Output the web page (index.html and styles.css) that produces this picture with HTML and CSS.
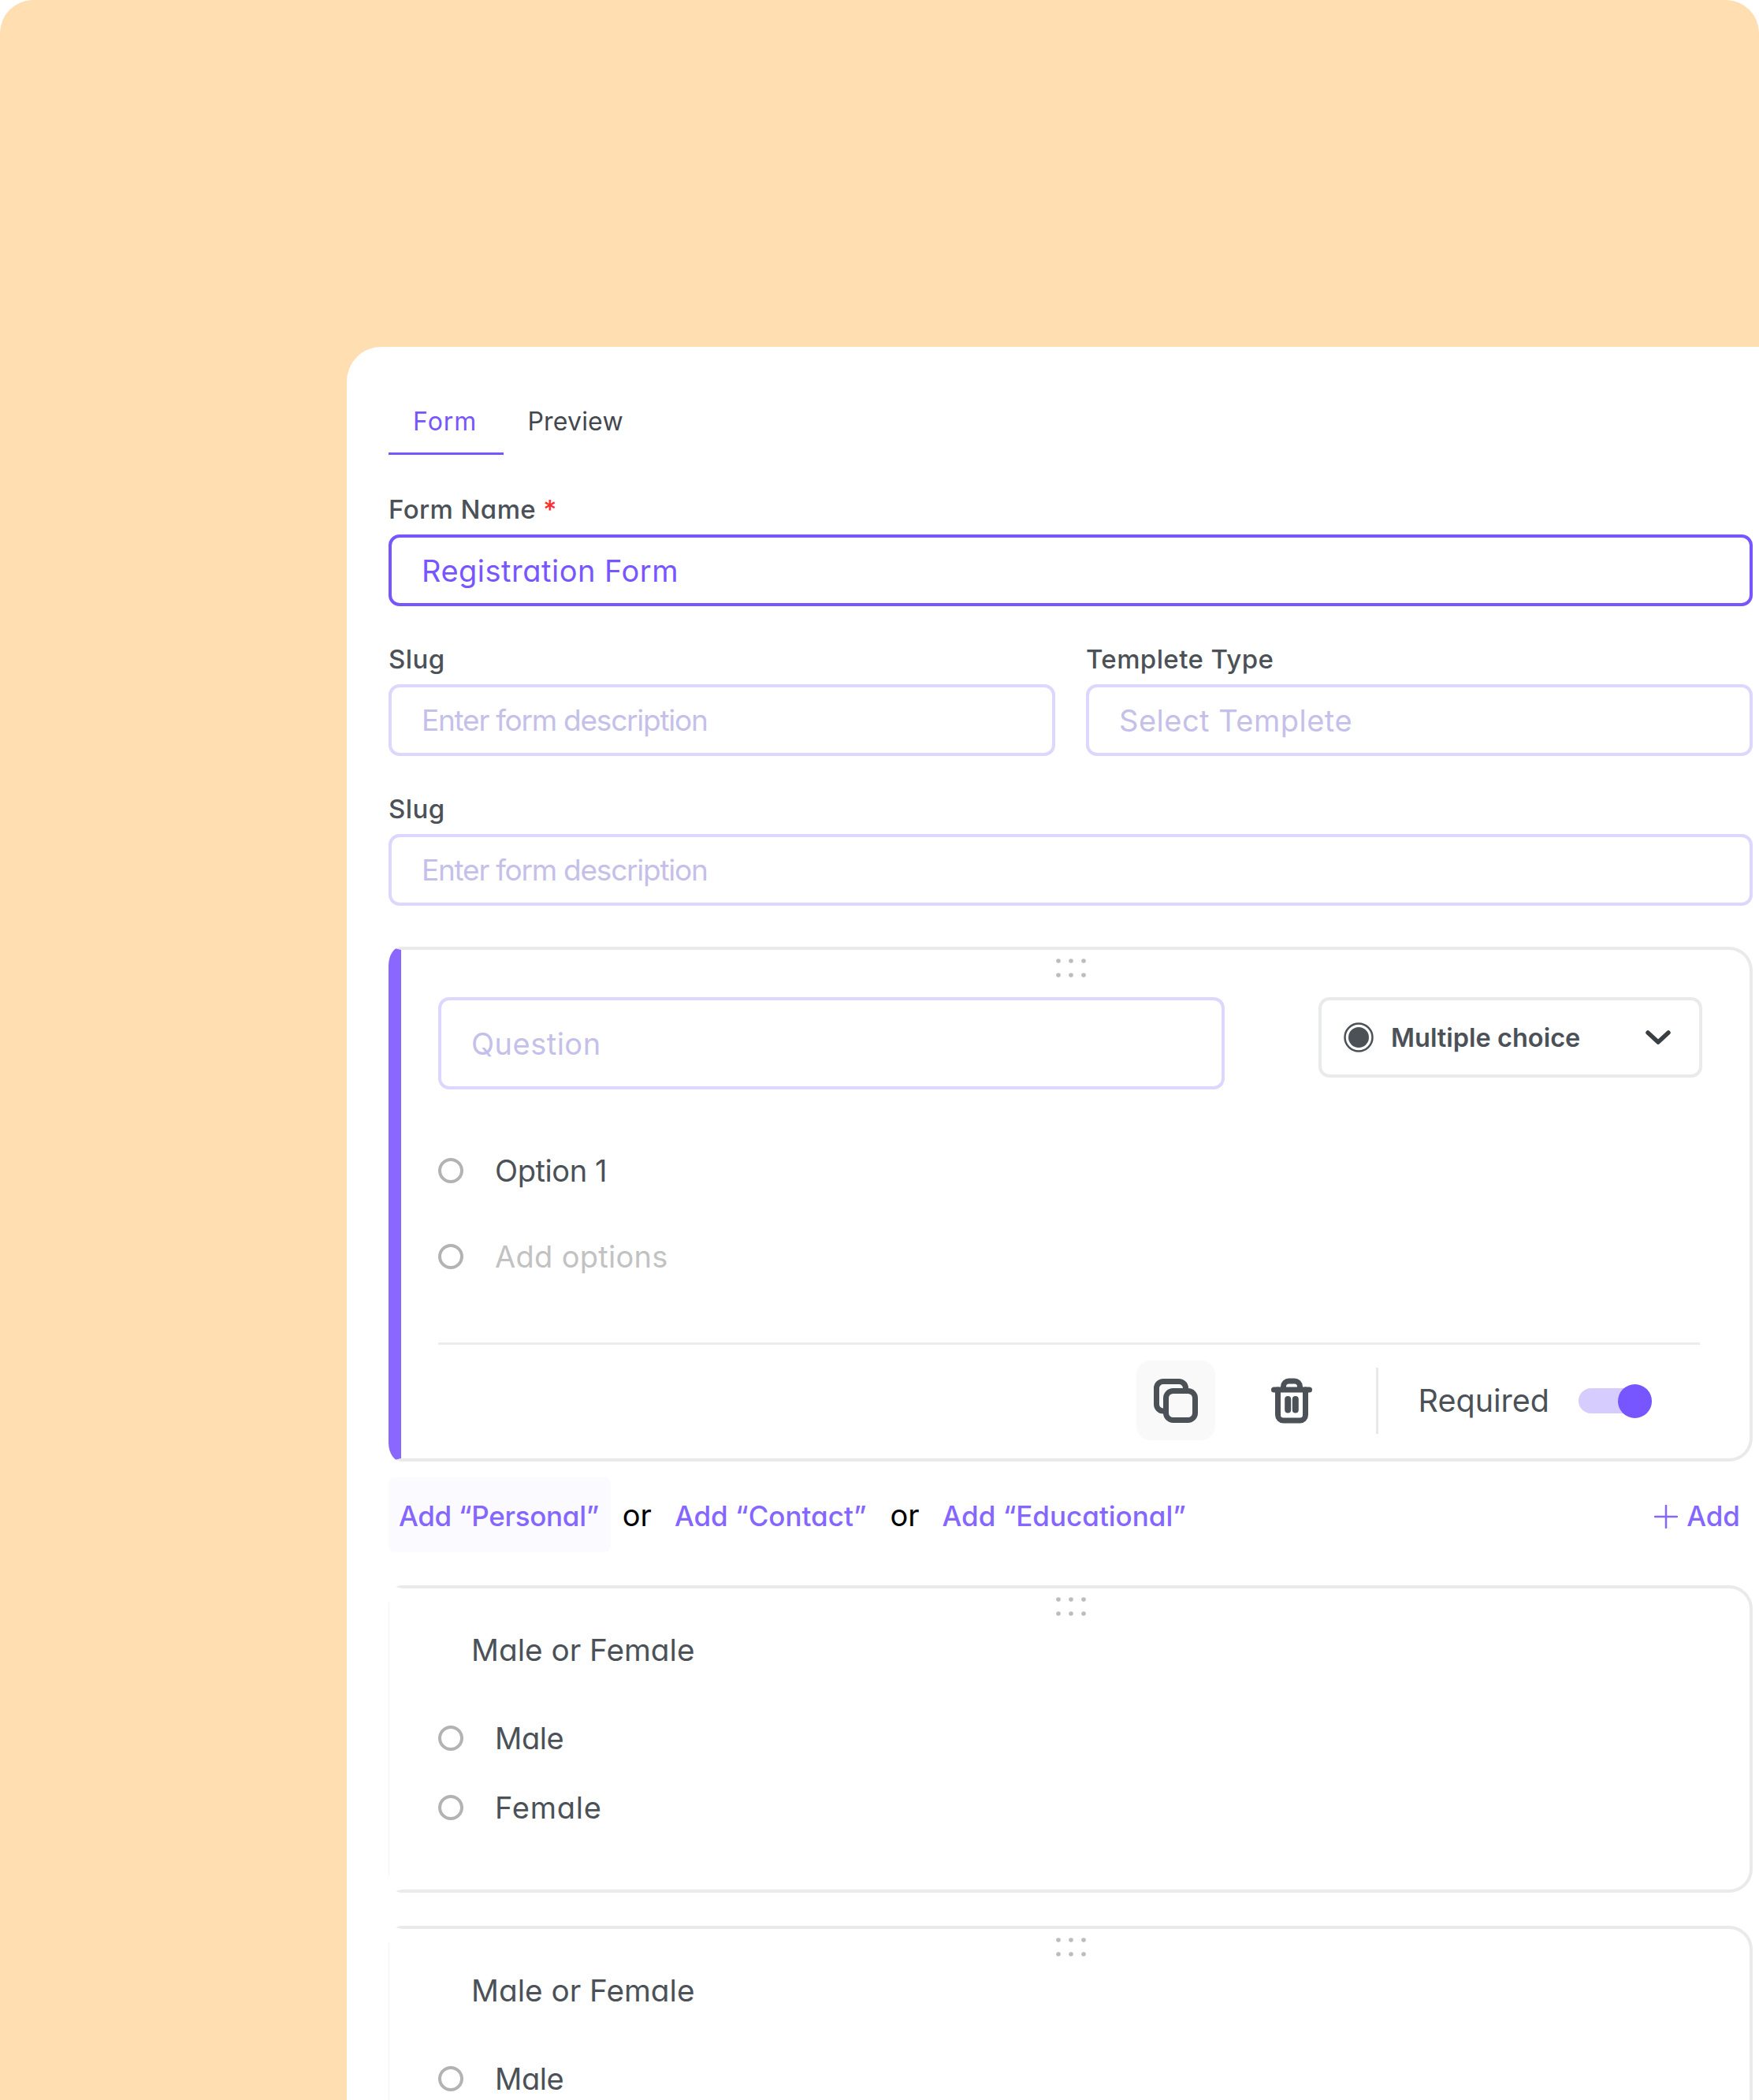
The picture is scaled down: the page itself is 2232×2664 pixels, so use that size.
FILE: index.html
```html
<!DOCTYPE html>
<html lang="en">
<head>
    <meta charset="UTF-8">
    <meta name="viewport" content="width=device-width, initial-scale=1.0">
    <title>Form Builder</title>
    <link rel="stylesheet" href="styles.css">
</head>
<body>

<div class="page">
    <main class="panel">
        <!-- Tabs -->
        <nav class="tabs">
            <a class="tab tab-active">Form</a>
            <a class="tab">Preview</a>
        </nav>

        <!-- Form details -->
        <div class="field field-first">
            <label for="formName">Form Name <span class="star">*</span></label>
            <input class="input input-active" id="formName" type="text" value="Registration Form">
        </div>
        <div class="field-row">
            <div class="field">
                <label for="slug">Slug</label>
                <input class="input input-desc" id="slug" type="text" placeholder="Enter form description">
            </div>
            <div class="field">
                <label for="template">Templete Type</label>
                <input class="input" id="template" type="text" placeholder="Select Templete">
            </div>
        </div>
        <div class="field">
            <label for="slug2">Slug</label>
            <input class="input input-desc" id="slug2" type="text" placeholder="Enter form description">
        </div>

        <!-- Question being edited -->
        <section class="card card-active">
            <div class="drag">
                <svg width="38" height="24" viewBox="0 0 38 24"><g fill="#bdbdbd"><circle cx="3" cy="3" r="2.8"/><circle cx="19" cy="3" r="2.8"/><circle cx="35" cy="3" r="2.8"/><circle cx="3" cy="21" r="2.8"/><circle cx="19" cy="21" r="2.8"/><circle cx="35" cy="21" r="2.8"/></g></svg>
            </div>
            <div class="card-body">
                <div class="question-row">
                    <input class="input input-question" type="text" placeholder="Question">
                    <div class="type-select">
                        <svg width="38" height="38" viewBox="0 0 38 38"><circle cx="19" cy="19" r="17.500" fill="none" stroke="#4b5157" stroke-width="2.500"/><circle cx="19" cy="19" r="13" fill="#4b5157"/></svg>
                        <span class="type-name">Multiple choice</span>
                        <svg class="chevron" width="32" height="18" viewBox="0 0 32 18"><path d="M3 3 L16 15 L29 3" fill="none" stroke="#3a3f44" stroke-width="5.500" stroke-linecap="round" stroke-linejoin="round"/></svg>
                    </div>
                </div>
                <div class="option option-one"><span class="radio"></span>Option 1</div>
                <div class="option option-add"><span class="radio"></span>Add options</div>
                <div class="divider"></div>
                <div class="toolbar">
                    <button class="icon-btn icon-btn-on">
                        <svg width="58" height="58" viewBox="0 0 58 58" fill="none" stroke="#4b5157" stroke-width="7"><path d="M15 42 H13 A8.500 8.500 0 0 1 4.500 33.500 V13 A8.500 8.500 0 0 1 13 4.500 H33 A8.500 8.500 0 0 1 41.500 13 V16"/><rect x="16.500" y="16.500" width="37" height="37" rx="9"/></svg>
                    </button>
                    <button class="icon-btn icon-trash">
                        <svg width="54" height="58" viewBox="0 0 54 58" fill="none" stroke="#4b5157" stroke-width="7" stroke-linecap="round"><path d="M4.500 15 H49.500"/><path d="M16.500 14 V11 A7 7 0 0 1 23.500 4 H30.500 A7 7 0 0 1 37.500 11 V14"/><path d="M9.500 15 V47 A7 7 0 0 0 16.500 54 H37.500 A7 7 0 0 0 44.500 47 V15"/><path d="M22.200 27 V40.500 M31.800 27 V40.500" stroke-width="8"/></svg>
                    </button>
                    <span class="tool-sep"></span>
                    <span class="required">Required</span>
                    <span class="toggle"><span class="knob"></span></span>
                </div>
            </div>
        </section>

        <!-- Add section links -->
        <div class="add-row">
            <a class="add-link add-link-on">Add “Personal”</a>
            <span class="or">or</span>
            <a class="add-link">Add “Contact”</a>
            <span class="or">or</span>
            <a class="add-link">Add “Educational”</a>
            <a class="add-new">
                <svg width="30" height="30" viewBox="0 0 30 30"><path d="M15 1 V29 M1 15 H29" stroke="#8566ff" stroke-width="2.500" stroke-linecap="round"/></svg>
                Add
            </a>
        </div>

        <!-- Saved questions -->
        <section class="card card-plain">
            <div class="drag">
                <svg width="38" height="24" viewBox="0 0 38 24"><g fill="#bdbdbd"><circle cx="3" cy="3" r="2.8"/><circle cx="19" cy="3" r="2.8"/><circle cx="35" cy="3" r="2.8"/><circle cx="3" cy="21" r="2.8"/><circle cx="19" cy="21" r="2.8"/><circle cx="35" cy="21" r="2.8"/></g></svg>
            </div>
            <div class="card-body">
                <div class="question-title">Male or Female</div>
                <div class="option option-male"><span class="radio"></span>Male</div>
                <div class="option option-female"><span class="radio"></span>Female</div>
            </div>
        </section>

        <section class="card card-plain">
            <div class="drag">
                <svg width="38" height="24" viewBox="0 0 38 24"><g fill="#bdbdbd"><circle cx="3" cy="3" r="2.8"/><circle cx="19" cy="3" r="2.8"/><circle cx="35" cy="3" r="2.8"/><circle cx="3" cy="21" r="2.8"/><circle cx="19" cy="21" r="2.8"/><circle cx="35" cy="21" r="2.8"/></g></svg>
            </div>
            <div class="card-body">
                <div class="question-title">Male or Female</div>
                <div class="option option-male"><span class="radio"></span>Male</div>
                <div class="option option-female"><span class="radio"></span>Female</div>
            </div>
        </section>
    </main>
</div>

</body>
</html>
```

FILE: styles.css
```css
* {
    box-sizing: border-box;
}
html, body {
    margin: 0;
    padding: 0;
    background-color: #ffffff;
}
body {
    font-family: Inter, "Noto Sans", sans-serif;
    font-feature-settings: "cv11" 1;
    color: #4b5157;
}
.page {
    height: 2664px;
    overflow: hidden;
    padding: 440px 0 0 440px;
    background-color: #ffdfb1;
    border-radius: 42px 42px 0 0;
}
.panel {
    min-height: 2224px;
    padding: 55px 8px 0 53px;
    background-color: #ffffff;
    border-radius: 44px 0 0 0;
}

/* Tabs */
.tabs {
    display: flex;
}
.tab {
    height: 82px;
    padding: 0 33px 0 30px;
    line-height: 80px;
    font-size: 32px;
    letter-spacing: 0.2px;
    color: #43474e;
}
.tab-active {
    padding: 0 34px 0 31px;
    letter-spacing: 1px;
    color: #7856ff;
    border-bottom: 3px solid #7856ff;
}

/* Fields */
.field {
    flex: 1;
    margin-top: 50px;
}
.field-first {
    margin-top: 52px;
}
.field label {
    display: block;
    height: 35px;
    margin-bottom: 14px;
    line-height: 35px;
    font-size: 33px;
    font-weight: 500;
    letter-spacing: 0.4px;
}
.star {
    color: #ff2d2d;
}
.field-row {
    display: flex;
    gap: 39px;
}
.input {
    display: block;
    width: 100%;
    height: 91px;
    padding: 0 38px;
    border: 4px solid #ddd6ff;
    border-radius: 14px;
    outline: none;
    background-color: #ffffff;
    font-family: inherit;
    font-feature-settings: inherit;
    font-size: 38px;
    letter-spacing: 0.5px;
    color: #4b5157;
}
.input::placeholder {
    color: #c5c0e9;
    opacity: 1;
}
.input-active {
    border-color: #7856ff;
    color: #7856ff;
}
.input-desc {
    font-size: 37px;
    letter-spacing: -1.250px;
}

/* Question cards */
.card {
    position: relative;
    border: 4px solid #eaeaea;
    border-left-width: 16px;
    border-radius: 16px 30px 30px 16px / 24px 30px 30px 24px;
    background-color: #ffffff;
}
.card-active {
    margin-top: 52px;
    border-left-color: #8a68ff;
}
.card-plain {
    margin-top: 42px;
    height: 390px;
    border-left-color: #ffffff;
}
.card-plain::before {
    content: "";
    position: absolute;
    left: -16px;
    top: 18px;
    bottom: 18px;
    width: 1px;
    background-color: #f4f4f4;
}
.drag {
    display: flex;
    justify-content: center;
    padding: 11px 12px 0 0;
}
.drag svg {
    display: block;
}
.card-body {
    padding: 0 60px 23px 47px;
}
.question-row {
    display: flex;
    justify-content: space-between;
    align-items: flex-start;
    margin-top: 25px;
}
.input-question {
    width: 998px;
    height: 117px;
}
.type-select {
    display: flex;
    align-items: center;
    width: 487px;
    height: 102px;
    padding: 0 36px 0 28px;
    border: 4px solid #e9eaea;
    border-radius: 14px;
}
.type-name {
    margin-left: 22px;
    font-size: 32.500px;
    font-weight: 600;
}
.chevron {
    margin-left: auto;
}

/* Options */
.option {
    display: flex;
    align-items: center;
    gap: 40px;
    height: 54px;
    font-size: 38px;
    color: #4b5157;
}
.radio {
    flex: none;
    width: 32px;
    height: 32px;
    border: 4px solid #b3b3b3;
    border-radius: 50%;
}
.option-one {
    margin-top: 76px;
    letter-spacing: -0.4px;
}
.option-add {
    margin-top: 55px;
    color: #c2c2c2;
    letter-spacing: 0.3px;
}
.divider {
    height: 3px;
    margin: 82px 3px 0 0;
    background-color: #ececec;
}

/* Toolbar under the question */
.toolbar {
    display: flex;
    justify-content: flex-end;
    align-items: center;
    margin-top: 20px;
    padding-right: 64px;
}
.icon-btn {
    display: flex;
    justify-content: center;
    align-items: center;
    width: 100px;
    height: 101px;
    padding: 0;
    border: none;
    border-radius: 18px;
    background: none;
}
.icon-btn-on {
    background-color: #f9f9f9;
}
.icon-trash {
    margin-left: 47px;
}
.tool-sep {
    width: 3px;
    height: 84px;
    margin-left: 57px;
    background-color: #e8e8e8;
}
.required {
    margin-left: 51px;
    font-size: 39.500px;
}
.toggle {
    position: relative;
    width: 93px;
    height: 32px;
    margin-left: 37px;
    border-radius: 16px;
    background-color: #d6ccfd;
}
.knob {
    position: absolute;
    right: 0;
    top: -5px;
    width: 43px;
    height: 43px;
    border-radius: 50%;
    background-color: #7856ff;
}

/* Add links */
.add-row {
    display: flex;
    align-items: center;
    gap: 15px;
    height: 95px;
    margin-top: 20px;
    font-size: 35px;
}
.add-link {
    height: 95px;
    padding: 0 15px 0 14px;
    line-height: 99px;
    color: #8566ff;
    font-weight: 500;
}
.add-link-on {
    padding-left: 13px;
    letter-spacing: -0.3px;
    background-color: #fafaff;
    border-radius: 8px;
}
.or {
    font-size: 38px;
    color: #000000;
}
.add-new {
    display: flex;
    align-items: center;
    gap: 11px;
    margin-left: auto;
    padding: 4px 16px 0 0;
    line-height: 95px;
    color: #8566ff;
    font-weight: 500;
}

/* Saved question text */
.question-title {
    height: 54px;
    margin-top: 16px;
    padding-left: 42px;
    line-height: 54px;
    font-size: 38.700px;
}
.option-male {
    margin-top: 58px;
    letter-spacing: -0.4px;
}
.option-female {
    margin-top: 34px;
    letter-spacing: 0.8px;
}
```
